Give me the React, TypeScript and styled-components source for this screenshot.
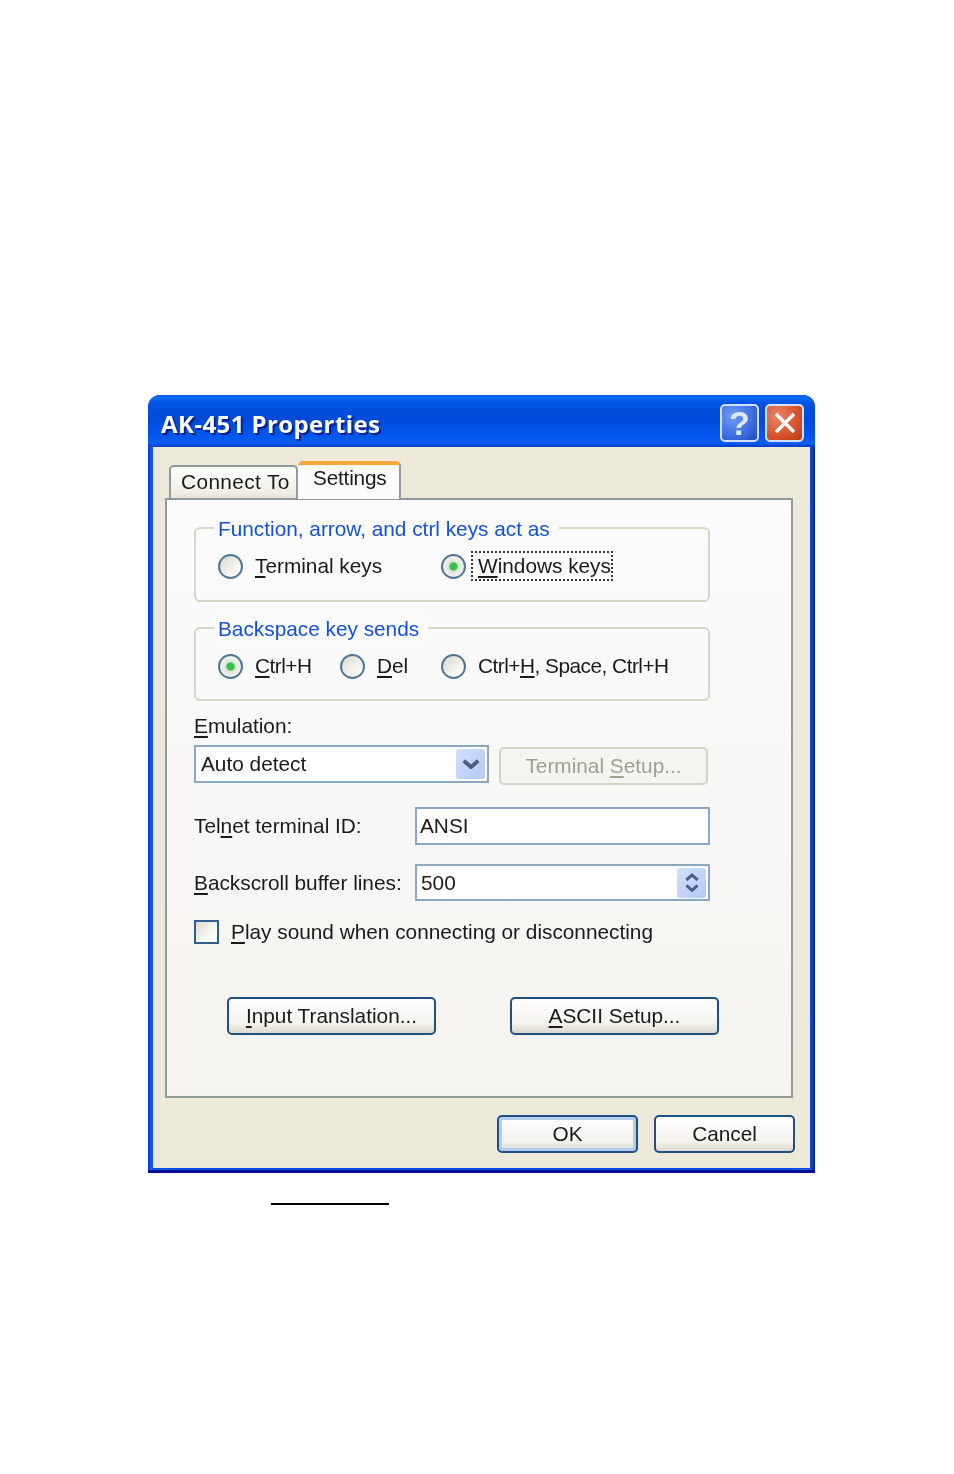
import { FC, ReactNode } from 'react'
import styled, { createGlobalStyle } from 'styled-components'

const GlobalStyle = createGlobalStyle`
  html, body { margin: 0; padding: 0; background: #fff; }
  body { font-family: "Liberation Sans", Arial, sans-serif; color: #1a1a1a; }
  u { text-underline-offset: 3px; text-decoration-thickness: 2px; }
`

const Page = styled.div`
  width: 954px;
  height: 1474px;
  padding: 395px 0 0 148px;
  box-sizing: border-box;
  overflow: hidden;
`

const Window = styled.div`
  width: 667px;
  height: 778px;
  display: flex;
  flex-direction: column;
  box-sizing: border-box;
  border-radius: 12px 12px 0 0;
  background: linear-gradient(90deg, #0831d9 0, #0f5cf0 3px, #0855dd 5px, #0855dd calc(100% - 5px), #0a3fcb calc(100% - 3px), #001ea0 100%);
  box-shadow: inset 0 -3px 0 #000d96;
  filter: blur(0.7px);
  font-size: 20.8px;
`

const TitleBar = styled.div`
  height: 52px;
  flex: none;
  box-sizing: border-box;
  padding: 9px 11px 5px 13px;
  display: flex;
  align-items: center;
  gap: 6px;
  border-radius: 12px 12px 0 0;
  background: linear-gradient(180deg, #0a5ae6 0, #0a6bf5 5%, #0355e4 14%, #0049d8 45%, #0057ec 80%, #0a5ff0 92%, #003dc8 100%);
`

const Title = styled.div`
  flex: 1;
  color: #fff;
  font-family: "Open Sans", sans-serif;
  font-weight: 700;
  font-size: 24px;
  letter-spacing: 0.4px;
  text-shadow: 2px 2px 1px #0f1f88;
`

const CaptionButton = styled.div<{ $close?: boolean }>`
  width: 39px;
  height: 38px;
  box-sizing: border-box;
  border: 2px solid #d4e0f8;
  border-radius: 5px;
  display: flex;
  align-items: center;
  justify-content: center;
  color: #dbe6fc;
  font-size: 34px;
  font-weight: 700;
  background: ${p =>
    p.$close
      ? 'radial-gradient(circle at 30% 30%, #e8866a, #d8512c 60%, #b93a12)'
      : 'radial-gradient(circle at 30% 30%, #6f9bf0, #3c6ee0 60%, #1f48bd)'};
`

const Client = styled.div`
  flex: 1;
  margin: 0 5px 5px;
  padding: 14px 17px 15px 12px;
  background: #ece9d8;
  display: flex;
  flex-direction: column;
`

const TabStrip = styled.div`
  display: flex;
  align-items: flex-end;
  height: 37px;
  padding-left: 4px;
  position: relative;
  z-index: 1;
`

const Tab = styled.div<{ $active?: boolean }>`
  box-sizing: border-box;
  width: ${p => (p.$active ? '103px' : '129px')};
  height: ${p => (p.$active ? '38px' : '33px')};
  margin-bottom: ${p => (p.$active ? '-1px' : '0')};
  padding: ${p => (p.$active ? '0 0 0 15px' : '2px 0 0 10px')};
  border: 2px solid #919b9c;
  border-bottom: none;
  border-top: ${p => (p.$active ? '4px solid #f5a83a' : '2px solid #919b9c')};
  border-left-width: ${p => (p.$active ? '0' : '2px')};
  border-radius: 5px 5px 0 0;
  background: ${p => (p.$active ? '#fcfcfe' : 'linear-gradient(180deg, #fff, #f0efe6 80%, #e6e3d4)')};
  line-height: 26px;
  letter-spacing: ${p => (p.$active ? '-0.2px' : '0.4px')};
  white-space: nowrap;
`

const Panel = styled.div`
  width: 628px;
  height: 600px;
  box-sizing: border-box;
  padding: 27px 0 0 27px;
  border: 2px solid #919b9c;
  background: linear-gradient(180deg, #fcfcfe 0, #f4f3ee 100%);
  display: flex;
  flex-direction: column;
  align-items: flex-start;
`

const Group = styled.div<{ $height: number; $top?: number }>`
  width: 516px;
  height: ${p => p.$height}px;
  margin-top: ${p => p.$top ?? 0}px;
  box-sizing: border-box;
  border: 2px solid #d6d6c6;
  border-radius: 6px;
  padding-left: 22px;
  display: flex;
  flex-direction: column;
  align-items: flex-start;
`

const Legend = styled.div`
  margin: -14px 0 0 -4px;
  padding: 1px 9px 0 4px;
  height: 25px;
  line-height: 25px;
  color: #1450d8;
  background: #fcfcfc;
`

const OptionRow = styled.div`
  display: flex;
  margin-top: 11px;
  height: 28px;
  align-items: center;
`

const OptionWrap = styled.div<{ $width?: number }>`
  width: ${p => (p.$width ? `${p.$width}px` : 'auto')};
  display: flex;
  align-items: center;
  gap: 12px;
`

const RadioDot = styled.div<{ $checked?: boolean }>`
  width: 25px;
  height: 25px;
  flex: none;
  box-sizing: border-box;
  border: 2px solid #4f7795;
  border-radius: 50%;
  background: ${p =>
    p.$checked
      ? 'radial-gradient(circle, #35c246 0, #35c246 22%, #dfe6dc 34%, #f4f4ee 75%)'
      : 'linear-gradient(135deg, #d8d8ce, #f2f2ec 55%, #fff)'};
`

const OptionLabel = styled.span<{ $focus?: boolean; $tight?: boolean }>`
  line-height: 24px;
  white-space: nowrap;
  letter-spacing: ${p => (p.$tight ? '-0.5px' : '0')};
  margin-left: ${p => (p.$focus ? '-5px' : '0')};
  padding: ${p => (p.$focus ? '1px 0 1px 5px' : '0')};
  outline: ${p => (p.$focus ? '2px dotted #333' : 'none')};
`

const FieldLabel = styled.div`
  margin-top: 13px;
  line-height: 24px;
  height: 24px;
`

const ComboRow = styled.div`
  margin-top: 7px;
  height: 40px;
  display: flex;
  gap: 10px;
`

const Field = styled.div<{ $width: number; $height?: number; $inset?: number }>`
  width: ${p => p.$width}px;
  height: ${p => p.$height ?? 38}px;
  box-sizing: border-box;
  border: 2px solid #8aa7c4;
  background: #fff;
  display: flex;
  align-items: center;
  justify-content: space-between;
  padding: 0 2px 0 ${p => p.$inset ?? 5}px;
`

const ArrowBox = styled.div`
  width: 29px;
  height: 30px;
  flex: none;
  border-radius: 3px;
  background: linear-gradient(135deg, #d3e0fb, #b4c9f6);
  display: flex;
  flex-direction: column;
  align-items: center;
  justify-content: center;
  gap: 3px;
`

const DisabledButton = styled.div`
  width: 209px;
  height: 38px;
  margin-top: 2px;
  box-sizing: border-box;
  border: 2px solid #d4d3c6;
  border-radius: 5px;
  background: #f4f4f0;
  color: #a1a192;
  display: flex;
  align-items: center;
  justify-content: center;
`

const FormRow = styled.div<{ $top: number }>`
  margin-top: ${p => p.$top}px;
  display: flex;
  align-items: center;
`

const FormLabel = styled.div`
  width: 221px;
  white-space: nowrap;
`

const CheckRow = styled.div`
  margin-top: 19px;
  display: flex;
  align-items: center;
  gap: 12px;
  height: 24px;
`

const CheckBox = styled.div`
  width: 25px;
  height: 24px;
  box-sizing: border-box;
  border: 2px solid #2f5f8f;
  background: linear-gradient(135deg, #dedcd0, #f6f6f2 60%, #fff);
`

const XpButton = styled.div<{ $default?: boolean }>`
  width: ${p => (p.$default !== undefined ? '141px' : '209px')};
  height: 38px;
  box-sizing: border-box;
  border: 2px solid #1f5080;
  border-radius: 5px;
  background: linear-gradient(180deg, #fff 0, #f5f4ef 70%, #dcd8ce 100%);
  box-shadow: ${p => (p.$default ? 'inset 0 0 0 3px #b4cbf2' : 'none')};
  display: flex;
  align-items: center;
  justify-content: center;
`

const ActionRow = styled.div`
  margin: 53px 0 0 33px;
  display: flex;
  gap: 74px;
`

const Footer = styled.div`
  margin-top: 17px;
  margin-right: -2px;
  display: flex;
  justify-content: flex-end;
  gap: 16px;
`

const PageRule = styled.div`
  width: 118px;
  height: 2px;
  margin: 30px 0 0 123px;
  background: #000;
`

const Chevron: FC<{ up?: boolean; size?: number }> = ({ up, size = 18 }) => (
  <svg width={size} height={size * 0.6} viewBox="0 0 10 6">
    <path d={up ? 'M1 5 L5 1.5 L9 5' : 'M1 1 L5 4.5 L9 1'} fill="none" stroke="#4d6185" strokeWidth="2.2" />
  </svg>
)

const Option: FC<{ checked?: boolean; focus?: boolean; tight?: boolean; width?: number; children: ReactNode }> = ({
  checked,
  focus,
  tight,
  width,
  children,
}) => (
  <OptionWrap $width={width}>
    <RadioDot $checked={checked} />
    <OptionLabel $focus={focus} $tight={tight}>
      {children}
    </OptionLabel>
  </OptionWrap>
)

export default function App() {
  return (
    <Page>
      <GlobalStyle />
      <Window>
        <TitleBar>
          <Title>AK-451 Properties</Title>
          <CaptionButton>?</CaptionButton>
          <CaptionButton $close>
            <svg width="24" height="24" viewBox="0 0 24 24">
              <path d="M3 3 L21 21 M21 3 L3 21" stroke="#fff" strokeWidth="3.4" />
            </svg>
          </CaptionButton>
        </TitleBar>
        <Client>
          <TabStrip>
            <Tab>Connect To</Tab>
            <Tab $active>Settings</Tab>
          </TabStrip>
          <Panel>
            <Group $height={75}>
              <Legend>Function, arrow, and ctrl keys act as</Legend>
              <OptionRow>
                <Option width={223}>
                  <u>T</u>erminal keys
                </Option>
                <Option checked focus>
                  <u>W</u>indows keys
                </Option>
              </OptionRow>
            </Group>
            <Group $height={74} $top={25}>
              <Legend>Backspace key sends</Legend>
              <OptionRow>
                <Option checked tight width={122}>
                  <u>C</u>trl+H
                </Option>
                <Option width={101}>
                  <u>D</u>el
                </Option>
                <Option tight>
                  Ctrl+<u>H</u>, Space, Ctrl+H
                </Option>
              </OptionRow>
            </Group>
            <FieldLabel>
              <u>E</u>mulation:
            </FieldLabel>
            <ComboRow>
              <Field $width={295}>
                Auto detect
                <ArrowBox>
                  <Chevron />
                </ArrowBox>
              </Field>
              <DisabledButton>
                <span>
                  Terminal <u>S</u>etup...
                </span>
              </DisabledButton>
            </ComboRow>
            <FormRow $top={22}>
              <FormLabel>
                Tel<u>n</u>et terminal ID:
              </FormLabel>
              <Field $width={295} $inset={3}>
                ANSI
              </Field>
            </FormRow>
            <FormRow $top={19}>
              <FormLabel>
                <u>B</u>ackscroll buffer lines:
              </FormLabel>
              <Field $width={295} $height={37} $inset={4}>
                500
                <ArrowBox>
                  <Chevron up size={14} />
                  <Chevron size={14} />
                </ArrowBox>
              </Field>
            </FormRow>
            <CheckRow>
              <CheckBox />
              <span>
                <u>P</u>lay sound when connecting or disconnecting
              </span>
            </CheckRow>
            <ActionRow>
              <XpButton>
                <span>
                  <u>I</u>nput Translation...
                </span>
              </XpButton>
              <XpButton>
                <span>
                  <u>A</u>SCII Setup...
                </span>
              </XpButton>
            </ActionRow>
          </Panel>
          <Footer>
            <XpButton $default>OK</XpButton>
            <XpButton $default={false}>Cancel</XpButton>
          </Footer>
        </Client>
      </Window>
      <PageRule />
    </Page>
  )
}
